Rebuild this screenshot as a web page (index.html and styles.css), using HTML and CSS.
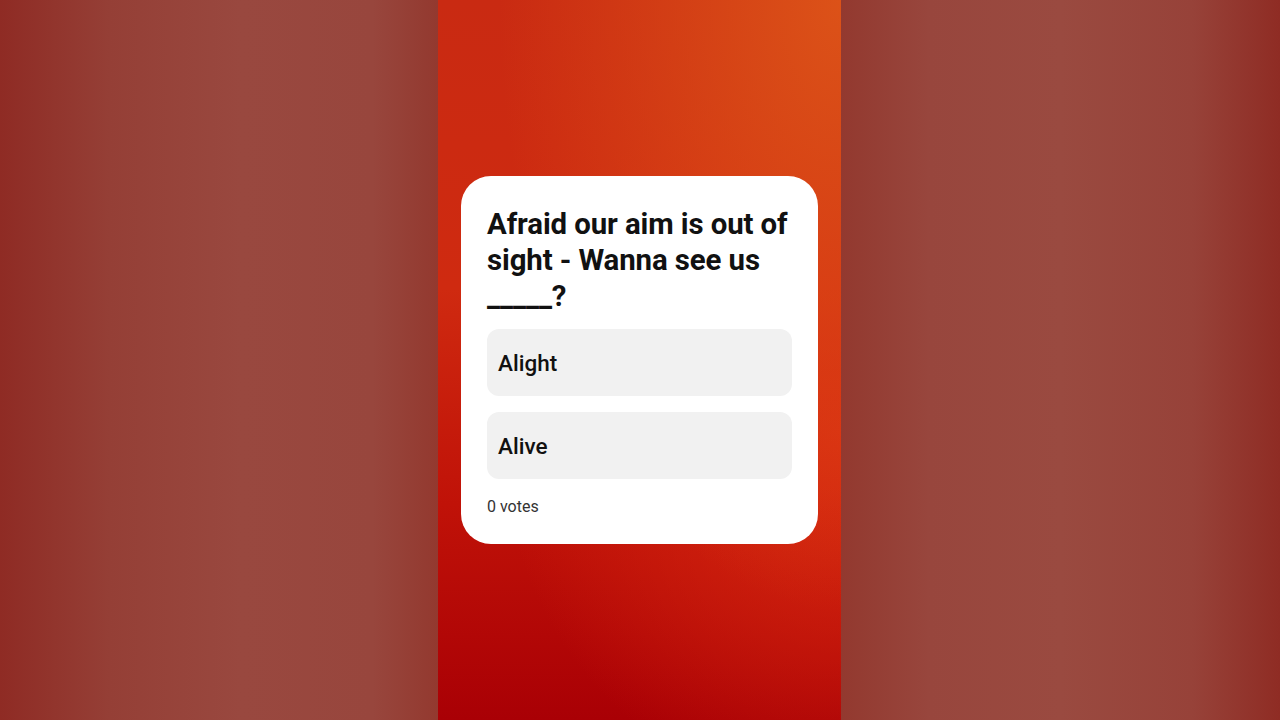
FILE: index.html
```html
<!DOCTYPE html>
<html>
<head>
<meta charset="utf-8">
<link rel="stylesheet" href="styles.css">
</head>
<body>
<div class="page">
  <div class="side side-left"></div>
  <div class="center">
    <div class="card">
      <h1 class="question">Afraid our aim is out of sight - Wanna see us _____?</h1>
      <div class="options">
        <div class="option">Alight</div>
        <div class="option">Alive</div>
      </div>
      <div class="votes">0 votes</div>
    </div>
  </div>
  <div class="side side-right"></div>
</div>
</body>
</html>
```
FILE: styles.css
```css
html, body {
  margin: 0;
  padding: 0;
  width: 1280px;
  height: 720px;
  overflow: hidden;
  font-family: Roboto, "Liberation Sans", sans-serif;
}
.page {
  display: flex;
  width: 1280px;
  height: 720px;
}
.side {
  height: 100%;
}
.side-left {
  width: 438px;
  background: linear-gradient(to right, #8f2b24 0%, #953f36 25%, #99483f 55%, #98463d 85%, #93392f 100%);
}
.side-right {
  width: 439px;
  background: linear-gradient(to right, #93392f 0%, #98463d 20%, #9a4a40 50%, #974239 80%, #8f2c24 100%);
}
.center {
  width: 403px;
  height: 100%;
  display: flex;
  justify-content: center;
  align-items: flex-start;
  background:
    radial-gradient(ellipse at 100% 0%, #dc5218 0%, rgba(220,82,24,0) 60%),
    radial-gradient(ellipse at 100% 60%, #d92a10 0%, rgba(217,42,16,0) 60%),
    linear-gradient(to bottom, #c92a12 0%, #cf2a10 40%, #c01208 70%, #a90005 100%);
}
.card {
  margin-top: 176px;
  width: 357px;
  box-sizing: border-box;
  background: #ffffff;
  border-radius: 30px;
  padding: 30px 20px 27px 26px;
}
.question {
  margin: 0;
  font-size: 29.4px;
  line-height: 36px;
  font-weight: 700;
  color: #111111;
  letter-spacing: -0.1px;
}
.options {
  margin-top: 15px;
  margin-right: 6px;
  display: flex;
  flex-direction: column;
  gap: 16px;
}
.option {
  height: 67px;
  box-sizing: border-box;
  background: #f1f1f1;
  border-radius: 12px;
  display: flex;
  align-items: center;
  padding-left: 11px;
  padding-top: 1px;
  font-size: 22.5px;
  font-weight: 500;
  color: #111111;
}
.votes {
  margin-top: 18px;
  font-size: 16px;
  line-height: 20px;
  color: #333333;
}
```
